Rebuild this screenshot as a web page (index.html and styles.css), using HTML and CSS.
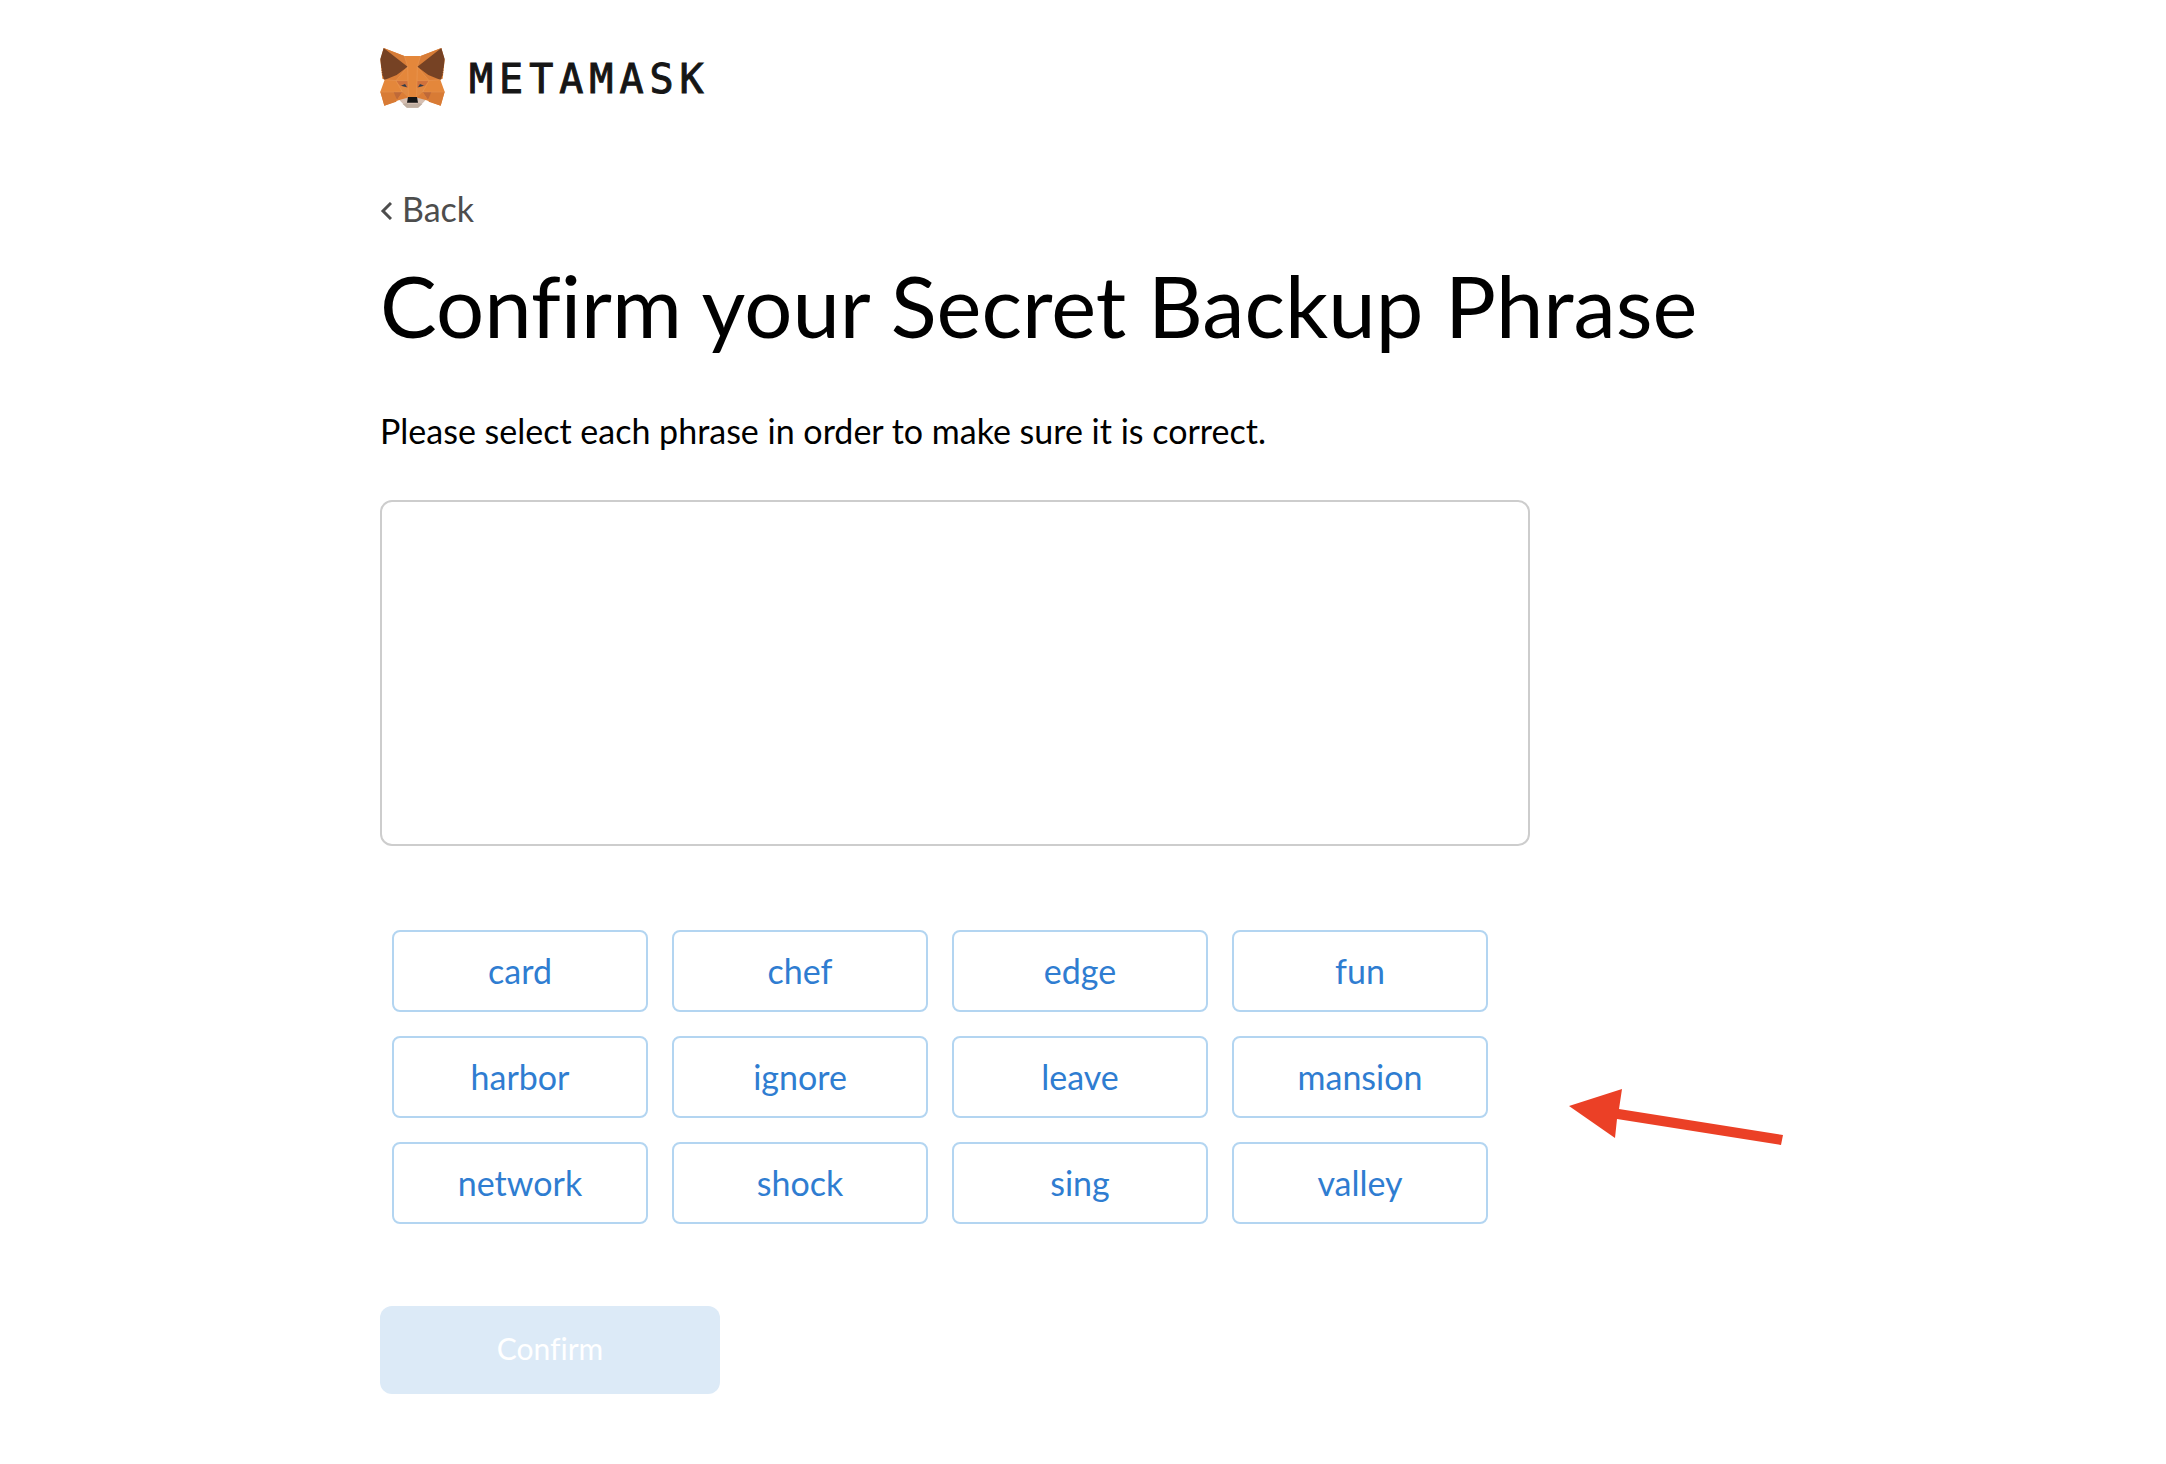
FILE: index.html
```html
<!DOCTYPE html>
<html lang="en">
<head>
<meta charset="utf-8">
<meta name="viewport" content="width=device-width, initial-scale=1">
<title>MetaMask</title>
<link rel="stylesheet" href="styles.css">
</head>
<body>
<div class="page">
  <header class="brand">
    <svg class="brand-fox" viewBox="30 24 195 180" aria-hidden="true">
      <path fill="#e4873b" d="M41 24 103 48H152L214 24 224 60 218 116 211 119 224 155 212 197 167 180H88L43 197 31 155 44 119 37 116 31 60Z"/>
      <path fill="#d77c37" d="M41 24 103 48 113 80ZM214 24 152 48 142 80Z"/>
      <path fill="#d87b35" d="M31 155H76L79 185 43 197ZM224 155H179L176 185 212 197Z"/>
      <path fill="#db7f38" d="M113 80 78 122 45 119ZM142 80 177 122 210 119Z"/>
      <path fill="#764224" d="M41 24 31 57 34 84 36 87 34 91 37 94 35 98 38 101 36 105 39 108 41 117 45 119 80 105 113 80ZM214 24 224 57 221 84 219 87 221 91 218 94 220 98 217 101 219 105 216 108 214 117 210 119 175 105 142 80Z"/>
      <path fill="#d0713b" d="M78 122H113L114 144 91 138ZM177 122H142L141 144 164 138Z"/>
      <path fill="#e18a43" d="M92 138 114 144 110 172 94 158ZM163 138 141 144 145 172 161 158Z"/>
      <path fill="#bf6938" d="M71 156H97L81 180ZM184 156H158L174 180Z"/>
      <path fill="#dc7d36" d="M97 156 113 172 88 180 81 180ZM158 156 142 172 167 180 174 180Z"/>
      <path fill="#303d4d" d="M93 137 105 132 111 142ZM162 137 150 132 144 142Z"/>
      <path fill="#d5bfb2" d="M88 180 113 173H142L167 180 145 203H110Z"/>
      <path fill="#bfaea0" d="M98 192 111 189 113 192H142L144 189 157 192 144 203H111Z"/>
      <path fill="#171717" d="M114 171H141L144 188H111Z"/>
      <path fill="none" stroke="#efa66b" stroke-width="1" d="M103 48 113 80 115 171M152 48 142 80 140 171M113 80 78 122H113M142 80 177 122H142M45 119 78 122 97 156H31M210 119 177 122 158 156H224"/>
    </svg>
    <span class="brand-name">METAMASK</span>
  </header>
  <main class="content">
    <a class="back" href="#"><svg class="back-icon" viewBox="0 0 12 18" aria-hidden="true"><path d="M11 1 3 9l8 8"/></svg>Back</a>
    <h1 class="title">Confirm your Secret Backup Phrase</h1>
    <p class="intro">Please select each phrase in order to make sure it is correct.</p>
    <div class="sorted" role="group" aria-label="Selected words"></div>
    <div class="choices">
      <div class="words">
        <button class="word" type="button">card</button>
        <button class="word" type="button">chef</button>
        <button class="word" type="button">edge</button>
        <button class="word" type="button">fun</button>
        <button class="word" type="button">harbor</button>
        <button class="word" type="button">ignore</button>
        <button class="word" type="button">leave</button>
        <button class="word" type="button">mansion</button>
        <button class="word" type="button">network</button>
        <button class="word" type="button">shock</button>
        <button class="word" type="button">sing</button>
        <button class="word" type="button">valley</button>
      </div>
      <svg class="pointer" viewBox="0 0 214 56" aria-hidden="true"><path fill="#eb4026" d="M0 17 53 0 50 20 214 46 212 56 48 30 46 49Z"/></svg>
    </div>
    <button class="confirm" type="button" disabled>Confirm</button>
  </main>
</div>
</body>
</html>
```
FILE: styles.css
```css
* { box-sizing: border-box; }

body {
  margin: 0;
  background: #fff;
  color: #000;
  font-family: Lato, "Open Sans", sans-serif;
  font-size: 34px;
  font-variant-ligatures: none;
}

.page {
  padding: 48px 380px 70px;
}

.brand {
  display: flex;
  align-items: center;
  gap: 24px;
  height: 60px;
}

.brand-fox { width: 65px; height: 60px; }

.brand-name {
  padding-top: 2px;
  color: #161616;
  font: 40px/60px "DejaVu Sans Mono", monospace;
  letter-spacing: 6px;
  -webkit-text-stroke: 1px currentColor;
}

.content {
  display: flex;
  flex-direction: column;
  align-items: flex-start;
  padding-top: 81px;
}

.back {
  display: flex;
  align-items: center;
  gap: 10px;
  color: #4d4d4d;
  line-height: 40px;
  text-decoration: none;
}

.back-icon {
  width: 12px;
  height: 18px;
  margin-top: 3px;
  fill: none;
  stroke: currentColor;
  stroke-width: 3px;
}

.title {
  margin: 24px 0 0;
  font-size: 85px;
  font-weight: 400;
  line-height: 104px;
  white-space: nowrap;
}

.intro {
  margin: 52px 0 0;
  line-height: 44px;
}

.sorted {
  width: 100%;
  max-width: 1150px;
  min-height: 346px;
  margin-top: 47px;
  border: 2px solid #cdcdcd;
  border-radius: 12px;
}

.choices {
  display: flex;
  align-items: flex-start;
  gap: 81px;
  margin-top: 84px;
  padding-left: 12px;
}

.words {
  display: grid;
  grid-template-columns: repeat(4, 256px);
  gap: 24px;
}

.word {
  height: 82px;
  padding: 0 0 2px;
  border: 2px solid #b3d5f1;
  border-radius: 8px;
  background: #fff;
  color: #2f7dd1;
  font: inherit;
}

.pointer {
  flex: none;
  width: 214px;
  height: 56px;
  margin-top: 159px;
}

.confirm {
  width: 340px;
  height: 88px;
  margin-top: 82px;
  padding: 0 0 4px;
  border: 0;
  border-radius: 12px;
  background: #dceaf7;
  color: #fff;
  font: inherit;
  font-size: 30px;
}
```
